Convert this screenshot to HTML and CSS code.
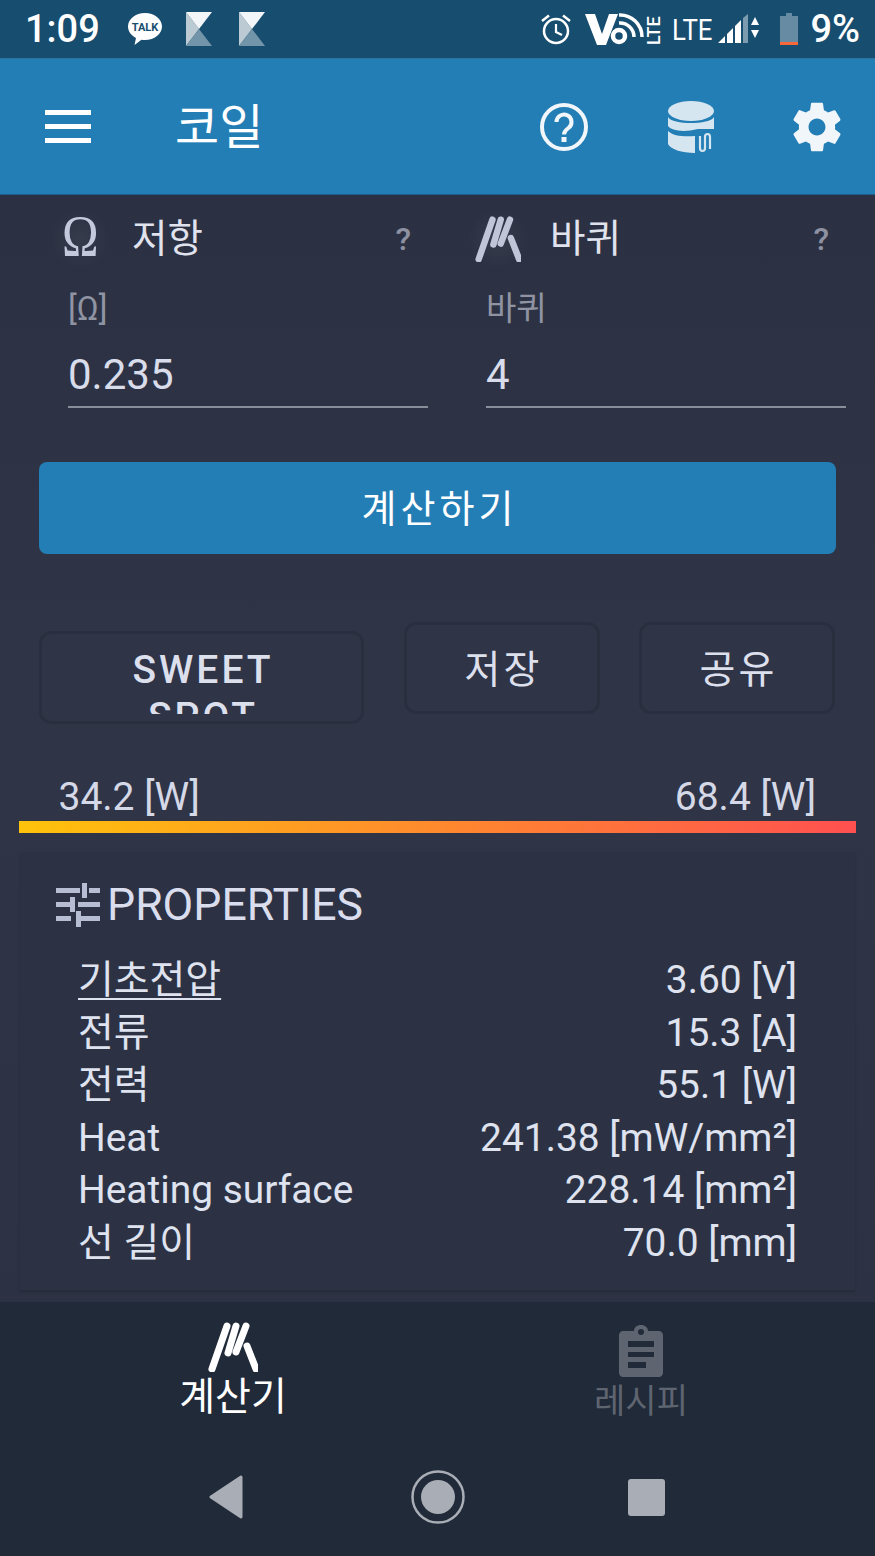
FILE: index.html
```html
<!DOCTYPE html>
<html lang="ko">
<head>
<meta charset="utf-8">
<title>코일</title>
<link rel="stylesheet" href="styles.css">
</head>
<body>
<svg class="defs" width="0" height="0" aria-hidden="true">
  <symbol id="coil" viewBox="0 0 50 50">
    <path d="M4 47 19 4M20 31 28 4M28 30 38 4M39 24 48 47" fill="none" stroke="currentColor" stroke-width="7" stroke-linecap="round"/>
  </symbol>
  <symbol id="k" viewBox="0 0 26 34">
    <path d="M0 0 13 17 0 34Z" fill="#bccbd3"/><path d="M0 0H26L13 17Z" fill="#f3f6f8"/><path d="M0 34 13 17 26 34Z" fill="#7295a9"/>
  </symbol>
</svg>
<div class="phone">
  <header class="status">
    <div class="status-left">
      <span class="clock">1:09</span>
      <svg class="ic-talk" viewBox="0 0 36 34"><path d="M18 1C8.600 1 1 7 1 14.500c0 5 3.300 9 8 11.500l-1.500 7 7-5.200c1.100.1 2.300.2 3.500.2 9.400 0 17-6 17-13.500S27.400 1 18 1Z" fill="#fff"/><text x="18" y="19" class="talk-t">TALK</text></svg>
      <svg class="ic-k"><use href="#k"/></svg>
      <svg class="ic-k"><use href="#k"/></svg>
    </div>
    <div class="status-right">
      <svg class="ic-alarm" viewBox="0 0 32 32"><circle cx="16" cy="18" r="12" fill="none" stroke="#fff" stroke-width="2.500"/><path d="M16 11v8l6 3" fill="none" stroke="#fff" stroke-width="2.200"/><path d="M2 8 9 2.500M30 8l-7-5.500" stroke="#fff" stroke-width="2.500" fill="none"/></svg>
      <svg class="ic-volte" viewBox="0 0 76 34"><path d="M0 2H10L17 22 24 2H33L21 33H12Z" fill="#fff"/><circle cx="34" cy="24" r="6" fill="none" stroke="#fff" stroke-width="4.500"/><path d="M34 11a14 14 0 0 1 15 14M34 3a22 22 0 0 1 23 22" fill="none" stroke="#fff" stroke-width="3.500"/><text class="lte-v" transform="translate(75 33) rotate(-90)">LTE</text></svg>
      <span class="lte">LTE</span>
      <svg class="ic-signal" viewBox="0 0 42 30"><path d="M0 29 7 22V29ZM9 29V20L15 14V29ZM17 29V12L23 6V29Z" fill="#fff"/><path d="M25 29V4L30 0V29Z" fill="#7d9bae"/><path d="M33 11 37 3 41 11ZM33 16H41L37 24Z" fill="#fff" /></svg>
      <svg class="ic-batt" viewBox="0 0 18 32"><path d="M6 0H12V3H18V30H0V3H6Z" fill="#668ba2"/><path d="M0 29H18V32H0Z" fill="#f4683c"/></svg>
      <span class="pct">9%</span>
    </div>
  </header>

  <nav class="appbar">
    <div class="appbar-left">
      <div class="burger"><i></i><i></i><i></i></div>
      <h1 class="title">코일</h1>
    </div>
    <div class="appbar-right">
      <svg class="ic-help" viewBox="0 0 48 48"><circle cx="24" cy="24" r="22" fill="none" stroke="#f0f6fa" stroke-width="4"/><path d="M16.500 19a7.500 7.500 0 1 1 12 6c-2.500 2-4.500 3-4.500 6.500" fill="none" stroke="#f0f6fa" stroke-width="4"/><rect x="21.500" y="34" width="5" height="5" fill="#f0f6fa"/></svg>
      <svg class="ic-db" viewBox="0 0 46 52"><ellipse cx="23" cy="10" rx="23" ry="10" fill="#d6e6f1"/><path d="M0 16C4 24 42 24 46 16V28H30C14 32 3 29 0 25ZM0 30C5 35 16 36 27 35V52C14 52 2 48 0 43Z" fill="#d6e6f1"/><path d="M32 35v12c0 4 5 4 5 0V36c0-4 5-4 5 0v12" fill="none" stroke="#d6e6f1" stroke-width="2.200"/></svg>
      <svg class="ic-gear" viewBox="0 0 24 24"><path fill="#f0f6fa" fill-rule="evenodd" d="M19.430 12.980c.04-.32.07-.64.07-.98s-.03-.66-.07-.98l2.110-1.650c.19-.15.24-.42.12-.64l-2-3.460c-.12-.22-.39-.3-.61-.22l-2.490 1c-.52-.4-1.080-.73-1.690-.98l-.38-2.650C14.460 2.180 14.250 2 14 2h-4c-.25 0-.46.18-.49.420l-.38 2.650c-.61.25-1.170.59-1.690.98l-2.490-1c-.23-.09-.49 0-.61.220l-2 3.460c-.13.220-.07.490.12.640l2.110 1.650c-.04.320-.07.650-.07.980s.03.660.07.980l-2.110 1.650c-.19.150-.24.420-.12.640l2 3.460c.12.220.39.300.61.220l2.490-1c.52.400 1.080.730 1.690.980l.38 2.650c.03.240.24.420.49.420h4c.25 0 .46-.18.490-.42l.38-2.650c.61-.25 1.170-.59 1.690-.98l2.490 1c.23.090.49 0 .61-.22l2-3.460c.12-.22.07-.49-.12-.64l-2.110-1.650zM12 15.500c-1.930 0-3.500-1.570-3.500-3.500s1.570-3.500 3.500-3.500 3.500 1.570 3.500 3.500-1.570 3.500-3.500 3.500z"/></svg>
    </div>
  </nav>

  <main class="content">
    <section class="inputs">
      <div class="input-col">
        <div class="input-head">
          <span class="head-icon"><span class="omega">Ω</span></span>
          <span class="head-label">저항</span>
          <span class="head-q">?</span>
        </div>
        <div class="field">
          <label class="field-label">[Ω]</label>
          <div class="field-value">0.235</div>
        </div>
      </div>
      <div class="input-col">
        <div class="input-head">
          <span class="head-icon"><svg class="ic-coil-s"><use href="#coil"/></svg></span>
          <span class="head-label">바퀴</span>
          <span class="head-q">?</span>
        </div>
        <div class="field">
          <label class="field-label">바퀴</label>
          <div class="field-value">4</div>
        </div>
      </div>
    </section>

    <button class="calc">계산하기</button>

    <div class="actions">
      <div class="ghost ghost-sweet"><div class="ghost-clip">SWEET<br>SPOT</div></div>
      <div class="ghost ghost-small">저장</div>
      <div class="ghost ghost-small ghost-last">공유</div>
    </div>

    <div class="range">
      <div class="range-labels"><span>34.2 [W]</span><span>68.4 [W]</span></div>
      <div class="range-bar"></div>
    </div>

    <section class="panel">
      <div class="panel-head">
        <svg class="ic-sliders" viewBox="0 0 44 44"><path d="M0 5H24V10H0ZM33 5H44V10H33ZM26 0H31V15H26ZM0 19H14V24H0ZM14 14H19V29H14ZM22 19H44V24H22ZM0 33H15V38H0ZM20 33H44V38H20ZM20 28H25V44H20Z" fill="#b7bed4"/></svg>
        <span>PROPERTIES</span>
      </div>
      <dl class="props">
        <div class="prop"><dt class="link">기초전압</dt><dd>3.60 [V]</dd></div>
        <div class="prop"><dt>전류</dt><dd>15.3 [A]</dd></div>
        <div class="prop"><dt>전력</dt><dd>55.1 [W]</dd></div>
        <div class="prop"><dt>Heat</dt><dd>241.38 [mW/mm²]</dd></div>
        <div class="prop"><dt>Heating surface</dt><dd>228.14 [mm²]</dd></div>
        <div class="prop"><dt>선 길이</dt><dd>70.0 [mm]</dd></div>
      </dl>
    </section>
  </main>

  <footer class="bottom">
    <div class="tabs">
      <div class="tab tab-on">
        <svg class="tab-icon"><use href="#coil"/></svg>
        <span>계산기</span>
      </div>
      <div class="tab">
        <svg class="tab-icon tab-icon-clip" viewBox="0 0 44 52"><path fill-rule="evenodd" d="M4 6H15C15 2.500 18 0 22 0s7 2.500 7 6H40C42 6 44 8 44 10V48C44 50 42 52 40 52H4C2 52 0 50 0 48V10C0 8 2 6 4 6ZM22 4a3 3 0 1 0 0 6 3 3 0 0 0 0-6ZM9 16V22H35V16ZM9 27V32H35V27ZM9 37V43H27V37Z" fill="currentColor"/></svg>
        <span>레시피</span>
      </div>
    </div>
    <div class="sysnav">
      <svg class="nav-back" viewBox="0 0 36 44"><path d="M33 2 3 22 33 42Z" fill="#a9adb5" stroke="#a9adb5" stroke-width="3" stroke-linejoin="round"/></svg>
      <svg class="nav-home" viewBox="0 0 54 54"><circle cx="27" cy="27" r="25.500" fill="none" stroke="#a9adb5" stroke-width="2.500"/><circle cx="27" cy="27" r="17" fill="#a9adb5"/></svg>
      <div class="nav-square"></div>
    </div>
  </footer>
</div>
</body>
</html>
```

FILE: styles.css
```css
* { box-sizing: border-box; }
html, body { margin: 0; padding: 0; }
body {
  width: 875px;
  height: 1556px;
  overflow: hidden;
  font-family: Roboto, "Noto Sans CJK KR", sans-serif;
  background: #2c3244;
}
.defs { position: absolute; }
.phone { width: 875px; height: 1556px; display: flex; flex-direction: column; }

/* status bar */
.status {
  height: 58px;
  background: #174d6e;
  display: flex;
  justify-content: space-between;
  align-items: center;
  padding: 0 15px 0 25px;
  color: #fff;
}
.status-left, .status-right { display: flex; align-items: center; }
.clock { font-size: 38px; font-weight: 500; width: 102px; }
.ic-talk { width: 36px; height: 34px; margin-right: 23px; }
.talk-t { font: 700 11px Roboto, sans-serif; fill: #174d6e; text-anchor: middle; }
.ic-k { width: 26px; height: 34px; margin-right: 27px; }
.ic-alarm { width: 32px; height: 32px; margin-right: 13px; margin-left: -1px; }
.ic-volte { width: 76px; height: 34px; margin-right: 11px; }
.lte-v { font: 500 18px Roboto, sans-serif; fill: #fff; }
.lte { font-size: 30px; width: 46px; transform: scaleX(0.86); transform-origin: left; }
.ic-signal { width: 42px; height: 30px; margin-right: 20px; }
.ic-batt { width: 18px; height: 32px; margin-right: 12px; }
.pct { font-size: 38px; font-weight: 500; }

/* app bar */
.appbar {
  height: 137px;
  background: #237eb5;
  border-top: 1px solid #2a739f;
  border-bottom: 1px solid #1e5f89;
  display: flex;
  justify-content: space-between;
  align-items: center;
  padding: 0 34px 0 45px;
  color: #fff;
}
.appbar-left, .appbar-right { display: flex; align-items: center; }
.burger { width: 46px; display: flex; flex-direction: column; gap: 9px; margin-right: 84px; }
.burger i { display: block; height: 5px; background: #fff; }
.title { margin: 0; font-size: 48px; font-weight: 400; line-height: 60px; padding-top: 2px; }
.ic-help { width: 48px; height: 48px; margin-right: 80px; margin-left: -1px; }
.ic-db { width: 46px; height: 52px; margin-right: 80px; }
.ic-gear { width: 58px; height: 58px; margin: 0 -5px 0 -6px; }

/* inputs */
.content { flex: 1; background: linear-gradient(#2b3142, #2f3547 40%, #2f3547 55%, #2c3244); }
.inputs { display: grid; grid-template-columns: 418px 418px; padding-left: 39px; }
.input-head { display: flex; align-items: center; height: 88px; padding-left: 9px; }
.head-icon {
  width: 60px; height: 60px; display: flex; align-items: center; justify-content: center;
  margin-right: 22px; margin-left: 2px;
  background: radial-gradient(closest-side, rgba(255,255,255,.05), rgba(255,255,255,0));
}
.omega { font: 400 60px/60px "Liberation Serif", serif; color: #c4c9dc; transform: translateY(-3px) scaleX(0.82); }
.ic-coil-s { width: 46px; height: 46px; color: #c0c5d8; }
.head-label { font-size: 38.500px; line-height: 50px; color: #e0e2ee; flex: 1; }
.head-q { font-size: 32px; color: #8d91a1; font-weight: 500; margin-right: 46px; }
.field { margin: 0 29px; width: 360px; border-bottom: 2px solid #8a8e9a; height: 125px; }
.field-label { display: block; font-size: 33px; line-height: 46px; height: 59px; padding-top: 3px; color: #8f93a2; }
.field-value { font-size: 42px; line-height: 66px; color: #d9dcea; }

.calc {
  display: block;
  width: 797px;
  height: 92px;
  margin: 54px 0 0 39px;
  padding: 0 0 5px 4px;
  border: 0;
  border-radius: 8px;
  background: #237eb5;
  color: #fff;
  font: 400 38px Roboto, "Noto Sans CJK KR", sans-serif;
  letter-spacing: 4px;
}

/* ghost buttons */
.actions { display: flex; align-items: baseline; padding-left: 39px; margin-top: 68px; height: 101px; }
.ghost {
  border: 3px solid #2a2f40;
  border-radius: 12px;
  color: #dcdfec;
  font-size: 39px;
  line-height: 47px;
  letter-spacing: 3px;
  padding-left: 3px;
  text-align: center;
  font-weight: 500;
}
.ghost-sweet { width: 325px; height: 93px; padding-top: 13px; margin-right: 40px; }
.ghost-clip { height: 67px; overflow: hidden; }
.ghost-small { width: 196px; height: 92px; padding-top: 22px; margin-right: 40px; font-weight: 400; }
.ghost-last { margin-right: 0; margin-left: -1px; }

/* range */
.range { margin: 51px 19px 0; }
.range-labels { display: flex; justify-content: space-between; padding: 0 40px 0 39.500px; font-size: 39px; line-height: 46px; color: #d5d8e6; }
.range-bar { height: 12px; margin-top: 1px; background: linear-gradient(90deg, #ffc30b, #ff5050); }

/* panel */
.panel {
  margin: 19px 20px 0;
  height: 438px;
  background: #2c3244;
  box-shadow: 0 2px 2px #262b3a;
  padding: 24px 0 0 36px;
}
.panel-head { display: flex; align-items: center; font-size: 44.600px; line-height: 58px; color: #dadded; }
.ic-sliders { width: 44px; height: 44px; margin-right: 7px; }
.props { margin: 20px 0 0 22px; padding-right: 58px; }
.prop { display: flex; justify-content: space-between; height: 52.500px; font-size: 38.900px; line-height: 52px; color: #dfe2ef; }
.prop dt, .prop dd { margin: 0; }
.link { text-decoration: underline; text-underline-offset: 5px; text-decoration-thickness: 2px; }

/* bottom */
.bottom { height: 254px; background: #212a39; }
.tabs { display: flex; padding: 0 30px 0 29px; height: 136px; }
.tab { width: 408px; display: flex; flex-direction: column; align-items: center; color: #5e6571; font-size: 34px; line-height: 46px; padding-top: 20px; }
.tab-on { color: #fff; font-size: 39px; line-height: 50px; }
.tab-icon { width: 50px; height: 50px; }
.tab-icon-clip { width: 44px; height: 52px; margin-top: 3px; margin-bottom: 1px; }
.sysnav { display: flex; align-items: center; justify-content: center; height: 118px; padding-right: 2px; }
.nav-back { width: 36px; height: 44px; margin-right: 167px; }
.nav-home { width: 54px; height: 54px; margin-right: 163px; }
.nav-square { width: 37px; height: 37px; background: #a9adb5; border-radius: 3px; }
```
